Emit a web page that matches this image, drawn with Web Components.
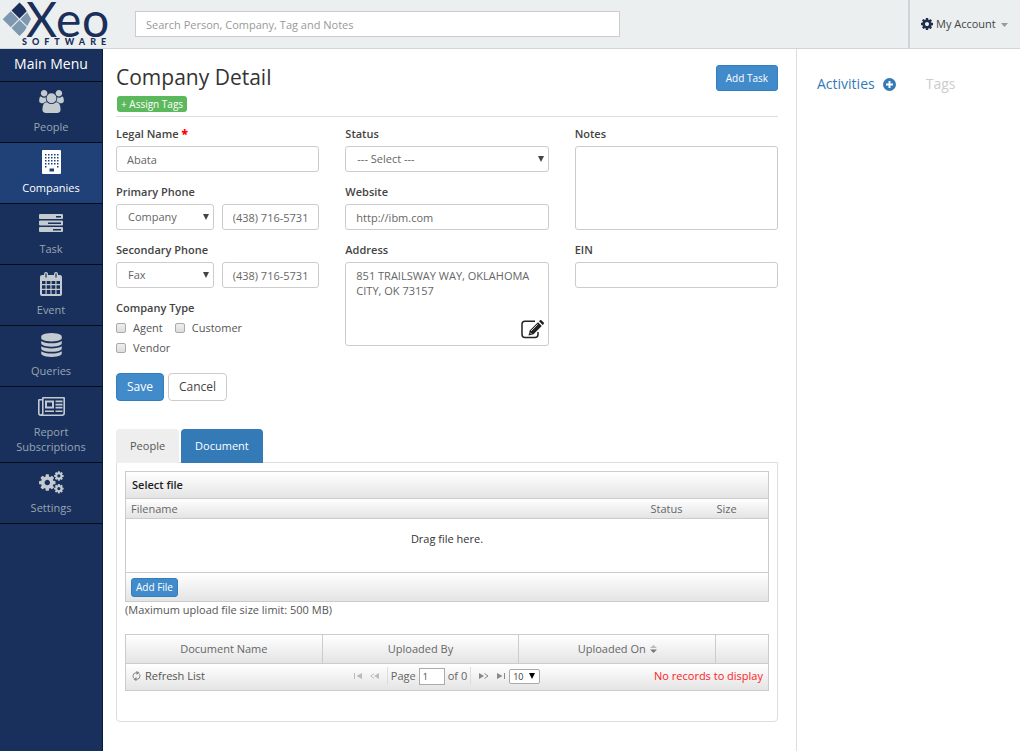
<!DOCTYPE html>
<html lang="en">
<head>
<meta charset="utf-8">
<meta name="viewport" content="width=device-width, initial-scale=1">
<title>Company Detail</title>
<style>
  body { margin: 0; font: 11px/16px "Open Sans", "Noto Sans", sans-serif; color: #555; background: #fff; }
</style>
</head>
<body>
<crm-app></crm-app>

<script>
const BASE = `
  *, *::before, *::after { box-sizing: border-box; }
  :host { display: block; }
  a { color: inherit; text-decoration: none; }
  button { font: inherit; cursor: pointer; }
  .btn { color: #fff; background: #428bca; border: 1px solid #357ebd; border-radius: 3px; padding: 0 9px; }
`;
const define = (name, template, setup) => customElements.define(name, class extends HTMLElement {
  connectedCallback() {
    if (this.shadowRoot) return;
    const root = this.attachShadow({ mode: 'open' });
    root.innerHTML = `<style>${BASE}</style>` + (typeof template === 'function' ? template(this) : template);
    if (setup) setup(root, this);
  }
});

const COG = 'M1152 896q0-106-75-181t-181-75-181 75-75 181 75 181 181 75 181-75 75-181zm512-109v222q0 12-8 23t-20 13l-185 28q-19 54-39 91 35 50 107 138 10 12 10 25t-9 23q-27 37-99 108t-94 71q-12 0-26-9l-138-108q-44 23-91 38-16 136-29 186-7 28-36 28h-222q-14 0-24.5-8.5t-11.5-21.5l-28-184q-49-16-90-37l-141 107q-10 9-25 9-14 0-25-11-126-114-165-168-7-10-7-23 0-12 8-23 15-21 51-66.5t54-70.5q-27-50-41-99l-183-27q-13-2-21-12.5t-8-23.5v-222q0-12 8-23t19-13l186-28q14-46 39-92-40-57-107-138-10-12-10-24 0-10 9-23 26-36 98.5-107.5t94.5-71.5q13 0 26 10l138 107q44-23 91-38 16-136 29-186 7-28 36-28h222q14 0 24.5 8.5t11.5 21.5l28 184q49 16 90 37l142-107q9-9 24-9 13 0 25 10 129 119 165 170 7 8 7 22 0 12-8 23-15 21-51 66.5t-54 70.5q26 50 41 98l183 28q13 2 21 12.5t8 23.5z';
const dots = () => {
  let s = '';
  for (let y = 0; y < 5; y++) for (let x = 0; x < 5; x++)
    if (!(y === 4 && x > 0 && x < 4)) s += `M${3 + x * 3} ${4 + y * 3}h1.5v1.5h-1.5z`;
  return s;
};
// Each icon: [width, height, viewBox, markup]
const ICONS = {
  people: [25, 23, '0 0 1920 1792', '<path d="M593 896q-162 5-265 128h-134q-82 0-138-40.5t-56-118.5q0-353 124-353 6 0 43.5 21t97.5 42.5 119 21.5q67 0 133-23-5 37-5 66 0 139 81 256zm1071 637q0 120-73 189.5t-194 69.5h-874q-121 0-194-69.5t-73-189.5q0-53 3.5-103.5t14-109 26.5-108.5 43-97.5 62-81 85.5-53.5 111.5-20q10 0 43 21.5t73 48 107 48 135 21.5 135-21.5 107-48 73-48 43-21.5q61 0 111.5 20t85.5 53.5 62 81 43 97.5 26.5 108.5 14 109 3.5 103.5zm-1024-1277q0 106-75 181t-181 75-181-75-75-181 75-181 181-75 181 75 75 181zm704 384q0 159-112.5 271.5t-271.5 112.5-271.5-112.5-112.5-271.5 112.5-271.5 271.5-112.5 271.5 112.5 112.5 271.5zm576 225q0 78-56 118.5t-138 40.5h-134q-103-123-265-128 81-117 81-256 0-29-5-66 66 23 133 23 59 0 119-21.5t97.5-42.5 43.5-21q124 0 124 353zm-128-609q0 106-75 181t-181 75-181-75-75-181 75-181 181-75 181 75 75 181z"/>'],
  building: [19, 24, '0 0 19 24', `<path fill-rule="evenodd" d="M1 0h17q1 0 1 1v22q0 1-1 1H1q-1 0-1-1V1q0-1 1-1zM7.5 18.5h4.5v3h-4.5z${dots()}"/>`],
  task: [24, 18, '0 0 24 18', '<path fill-rule="evenodd" d="M1 0h22q1 0 1 1v3q0 1-1 1H1q-1 0-1-1V1q0-1 1-1zM17 2h5v1.5h-5zM1 6.5h22q1 0 1 1v3q0 1-1 1H1q-1 0-1-1v-3q0-1 1-1zM9 8.5h13v1.5H9zM1 13h22q1 0 1 1v3q0 1-1 1H1q-1 0-1-1v-3q0-1 1-1zM14 15h8v1.5h-8z"/>'],
  event: [22, 24, '0 0 22 24', '<path fill-rule="evenodd" d="M2 3h2V2q0-2 2-2t2 2v1h6V2q0-2 2-2t2 2v1h2q2 0 2 2v17q0 2-2 2H2q-2 0-2-2V5q0-2 2-2zM5.4 1.5h1.2v4H5.400zM15.4 1.5h1.2v4h-1.2zM2 9h3.5v3H2zM6.7 9h3.7v3H6.700zM11.6 9h3.7v3h-3.7zM16.5 9H20v3h-3.5zM2 13.2h3.5v3.6H2zM6.7 13.2h3.7v3.6H6.700zM11.6 13.2h3.7v3.6h-3.7zM16.5 13.2H20v3.6h-3.5zM2 18h3.5v4H2zM6.7 18h3.7v4H6.700zM11.6 18h3.7v4h-3.7zM16.5 18H20v4h-3.5z"/>'],
  queries: [21, 24, '128 0 1536 1792', '<path d="M896 768q237 0 443-43t325-127v170q0 69-103 128t-280 93.5-385 34.5-385-34.5-280-93.5-103-128v-170q119 84 325 127t443 43zm0 768q237 0 443-43t325-127v170q0 69-103 128t-280 93.5-385 34.5-385-34.5-280-93.5-103-128v-170q119 84 325 127t443 43zm0-384q237 0 443-43t325-127v170q0 69-103 128t-280 93.5-385 34.5-385-34.5-280-93.5-103-128v-170q119 84 325 127t443 43zm0-1152q208 0 385 34.5t280 93.5 103 128v128q0 69-103 128t-280 93.5-385 34.5-385-34.5-280-93.5-103-128v-128q0-69 103-128t280-93.5 385-34.5z"/>'],
  report: [27, 19, '0 0 27 19', '<path fill-rule="evenodd" d="M5 0h21q1 0 1 1v15q0 3-3 3H3q-3 0-3-3V3q0-1 1-1h3V1q0-1 1-1zM1.6 3.6v12.400q0 1.3 1.2 1.3T4 16V3.600zM5.6 1.600V16q0 .8-.3 1.400H24q1.400 0 1.400-1.400V1.600zM7 3.500h9v8H7zM9 5.500v4h5v-4zM17.500 3.500h7v1.700h-7zM17.500 6.700h7v1.700h-7zM17.500 9.800h7v1.700h-7zM7 13.500h9v1.500H7zM17.500 13.500h7v1.500h-7z"/>'],
  settings: [25, 23, '0 0 25 23', `<path transform="translate(-1.3 2) scale(.0107)" d="${COG}"/><path transform="translate(14.3 -.6) scale(.0062)" d="${COG}"/><path transform="translate(14.3 12.1) scale(.0062)" d="${COG}"/>`],
  cog: [12, 12, '128 128 1536 1536', `<path d="${COG}"/>`],
  plus: [13, 13, '0 0 13 13', '<path fill-rule="evenodd" d="M6.5 0a6.5 6.5 0 1 1 0 13 6.5 6.5 0 0 1 0-13zM5.5 3v2.5H3v2h2.5V10h2V7.500H10v-2H7.500V3z"/>'],
  caret: [7, 4, '0 0 7 4', '<path d="M0 0h7L3.5 4z"/>'],
  arrow: [6, 6, '0 0 6 6', '<path d="M0 0h6L3 6z"/>'],
  edit: [23, 19, '0 0 23 19', '<path d="M14 1.2H4Q1 1.2 1 4v10.5q0 3 3 3h10q3 0 3-3V12" fill="none" stroke="currentColor" stroke-width="1.5"/><path d="M17 2.2l3.8 3.8-8.3 8.2-5 1.3 1.2-5zM18 1.3l1-1q.7-.5 1.4 0l2.3 2.3q.6.7 0 1.4l-1 1z"/><path d="M10 11l6.7-6.6M9 12.5l1.5 1.5" stroke="#fff" stroke-width=".8"/>'],
  first: [8, 6, '0 0 8 6', '<path d="M0 0h1v6H0zM8 0v6L2.5 3z"/>'],
  prev: [9, 6, '0 0 9 6', '<path d="M9 0v6L4 3z"/><path d="M4 .5L.8 3 4 5.5" fill="none" stroke="currentColor"/>'],
  next: [10, 6, '0 0 10 6', '<path d="M0 0v6l5-3z"/><path d="M5.5.5L9 3 5.5 5.5" fill="none" stroke="currentColor"/>'],
  last: [8, 6, '0 0 8 6', '<path d="M7 0h1v6H7zM0 0v6l5.5-3z"/>'],
  refresh: [9, 10, '0 0 9 10', '<path d="M5.5 1.7H4Q1 2 1 5q0 1.5 1 2.5M3.5 8.3H5Q8 8 8 5q0-1.5-1-2.5" fill="none" stroke="currentColor"/><path d="M4.5-.3l3 2-3 2.2zM4.5 6.100v4.200L1.500 8.300z"/>'],
  sort: [7, 8, '0 0 7 8', '<path d="M0 3h7L3.5 0z" opacity=".45"/><path d="M0 4.5h7L3.5 8z"/>']
};
define('crm-icon', el => {
  const [w, h, box, body] = ICONS[el.getAttribute('name')];
  return `<style>:host { display: inline-flex; flex: none; } svg { display: block; }</style>
  <svg width="${w}" height="${h}" viewBox="${box}" fill="currentColor" aria-hidden="true">${body}</svg>`;
});

define('crm-logo', `
  <style>
    :host { flex: none; width: 112px; color: #1b2f5b; }
    svg { display: block; overflow: visible; }
    .name { font: 48px Lato, sans-serif; }
    .sub { font: 900 9px Lato, sans-serif; letter-spacing: 5px; }
  </style>
  <svg width="112" height="48" viewBox="0 0 112 48" role="img" aria-label="Xeo Software" fill="currentColor">
    <path d="M19.500 2.500l8 8-8 8-8-8z"/>
    <path d="M10.700 11.300l8 8-8 8-8-8zM28.300 11.300l8 8-8 8-8-8zM19.500 20l8 8-8 8-8-8z" fill="#7d98af"/>
    <path d="M22 3h8l12 16-12 17h-8l9-17z" fill="#ebeff0"/>
    <text class="name" x="26 56 82" y="37">Xeo</text>
    <text class="sub" x="22" y="45">SOFTWARE</text>
  </svg>`);

define('crm-header', `
  <style>
    :host { display: flex; align-items: stretch; height: 49px; background: #ebeff0; border-bottom: 1px solid #cfd6d9; }
    .search { flex: 1; display: flex; align-items: center; padding: 0 24px 0 23px; }
    input { width: 100%; max-width: 485px; height: 26px; padding: 0 10px; border: 1px solid #ccc; font: inherit; color: #555; background: #fff; }
    input::placeholder { color: #999; opacity: 1; }
    button { display: flex; align-items: center; gap: 3px; padding: 0 12px 0 11px; width: 112px; border: 0; border-left: 2px solid #cfd4d6; background: none; color: #444; white-space: nowrap; }
    crm-icon { color: #1b2f4b; }
    .caret { color: #999; margin: 2px 0 0 2px; }
  </style>
  <crm-logo></crm-logo>
  <div class="search"><input type="search" aria-label="Search" placeholder="Search Person, Company, Tag and Notes"></div>
  <button type="button"><crm-icon name="cog"></crm-icon>My Account<crm-icon class="caret" name="caret"></crm-icon></button>`);

define('crm-nav-item', el => `
  <style>
    a { display: flex; flex-direction: column; align-items: center; gap: 6px; padding: 7px 8px 8px; border-bottom: 1px solid #050d1c; color: #98a5b3; line-height: 15px; text-align: center; }
    :host([active]) a { background: #204178; color: #fff; }
    .pic { display: flex; align-items: center; height: 24px; color: #c3cad0; }
    :host([active]) .pic { color: #fff; }
  </style>
  <a href="#${el.getAttribute('icon')}" ${el.hasAttribute('active') ? 'aria-current="page"' : ''}><span class="pic"><crm-icon name="${el.getAttribute('icon')}"></crm-icon></span><span><slot></slot></span></a>`);

define('crm-nav', `
  <style>
    :host { background: #18305b; border-right: 1px solid #0c1a36; }
    h2 { margin: 0; padding: 5px 0 7px; font: 14px/20px "Open Sans", sans-serif; color: #fff; text-align: center; border-bottom: 1px solid #050d1c; }
  </style>
  <nav>
    <h2>Main Menu</h2>
    <crm-nav-item icon="people">People</crm-nav-item>
    <crm-nav-item icon="building" active>Companies</crm-nav-item>
    <crm-nav-item icon="task">Task</crm-nav-item>
    <crm-nav-item icon="event">Event</crm-nav-item>
    <crm-nav-item icon="queries">Queries</crm-nav-item>
    <crm-nav-item icon="report">Report Subscriptions</crm-nav-item>
    <crm-nav-item icon="settings">Settings</crm-nav-item>
  </nav>`);

const FIELD = `
  label, legend { display: block; margin: 0 0 4px; padding: 0; line-height: 16px; font-weight: 600; color: #444; }
  input[type=text], input[type=tel], input[type=url], select, textarea {
    display: block; width: 100%; height: 26px; margin: 0; padding: 0 10px; border: 1px solid #ccc; border-radius: 3px;
    background: #fff; color: #666; font: 11px/16px "Open Sans", sans-serif; appearance: none; }
  textarea { height: 84px; padding: 5px 10px; resize: none; line-height: 15px; }
  select { padding: 0 11px; }
  .control { position: relative; min-width: 0; }
  .arrow { position: absolute; right: 5px; top: 10px; color: #444; pointer-events: none; }
  .edit { position: absolute; right: 5px; bottom: 7px; display: flex; padding: 0; border: 0; background: none; color: #222; }
`;
const select = (id, text) =>
  `<div class="control"><select id="${id}"><option>${text}</option></select><crm-icon class="arrow" name="arrow"></crm-icon></div>`;

define('crm-field', el => {
  const value = el.getAttribute('value') || '', kind = el.getAttribute('kind') || 'text';
  let control;
  if (kind === 'select') control = select('c', value);
  else if (kind === 'textarea') control = `<div class="control"><textarea id="c">${value}</textarea>${el.hasAttribute('editable')
    ? '<button class="edit" type="button" aria-label="Edit address"><crm-icon name="edit"></crm-icon></button>' : ''}</div>`;
  else control = `<input id="c" type="${kind}" value="${value}">`;
  const star = el.hasAttribute('required') ? ' <span class="star">*</span>' : '';
  return `<style>${FIELD} .star { color: #f00; font-size: 12px; line-height: 8px; font-weight: 800; }</style>
    <label for="c">${el.getAttribute('label')}${star}</label>${control}`;
});

define('crm-phone', el => `
  <style>${FIELD} .pair { display: grid; grid-template-columns: 1fr 1fr; gap: 8px; }</style>
  <label for="kind">${el.getAttribute('label')}</label>
  <div class="pair">${select('kind', el.getAttribute('kind'))}
    <input type="tel" aria-label="${el.getAttribute('label')} number" value="${el.getAttribute('number')}"></div>`);

define('crm-checks', `
  <style>${FIELD}
    fieldset { margin: 0; padding: 0; border: 0; }
    .list { display: flex; flex-wrap: wrap; column-gap: 12px; width: 160px; }
    .list label { display: flex; align-items: center; gap: 7px; margin: 0; line-height: 20px; font-weight: 400; color: #555; }
    input { appearance: none; width: 10px; height: 10px; margin: 0; border: 1px solid #aaa; border-radius: 2px; background: linear-gradient(#eee, #ddd); }
    legend { margin-bottom: 2px; }
  </style>
  <fieldset><legend>Company Type</legend><div class="list">
    <label><input type="checkbox">Agent</label>
    <label><input type="checkbox">Customer</label>
    <label><input type="checkbox">Vendor</label>
  </div></fieldset>`);

define('crm-company-form', `
  <style>
    .cols { display: grid; grid-template-columns: repeat(3, minmax(0, 1fr)); gap: 26px; }
    .col { display: flex; flex-direction: column; gap: 12px; }
    .actions { display: flex; gap: 4px; margin-top: 15px; }
    .btn { height: 28px; padding: 0 10px; border-radius: 4px; font-size: 12px; }
    .plain { color: #444; background: #fff; border-color: #ccc; }
  </style>
  <form>
    <div class="cols">
      <div class="col">
        <crm-field label="Legal Name" value="Abata" required></crm-field>
        <crm-phone label="Primary Phone" kind="Company" number="(438) 716-5731"></crm-phone>
        <crm-phone label="Secondary Phone" kind="Fax" number="(438) 716-5731"></crm-phone>
        <crm-checks></crm-checks>
      </div>
      <div class="col">
        <crm-field label="Status" kind="select" value="--- Select ---"></crm-field>
        <crm-field label="Website" kind="url" value="http://ibm.com"></crm-field>
        <crm-field label="Address" kind="textarea" value="851 TRAILSWAY WAY, OKLAHOMA CITY, OK 73157" editable></crm-field>
      </div>
      <div class="col">
        <crm-field label="Notes" kind="textarea"></crm-field>
        <crm-field label="EIN"></crm-field>
      </div>
    </div>
    <div class="actions"><button class="btn" type="button">Save</button><button class="btn plain" type="button">Cancel</button></div>
  </form>`);

const TABLE = `
  table { width: 100%; border-collapse: collapse; table-layout: fixed; border: 1px solid #ccc; }
  th, td { padding: 0 6px; font-weight: 400; color: #666; }
  .bar { background: linear-gradient(#fff, #e4e4e4); }
  tr { border-bottom: 1px solid #ccc; }
`;
define('crm-upload', `
  <style>${TABLE}
    caption { height: 27px; padding: 0 6px; border: 1px solid #ccc; border-bottom: 0; text-align: left; line-height: 26px; font-weight: 600; color: #222; }
    th { height: 20px; padding: 0 5px; line-height: 19px; text-align: left; }
    .status { width: 66px; padding: 0; } .size { width: 52px; padding: 0; }
    .drop { height: 54px; padding: 0 0 14px; text-align: center; color: #333; }
    .foot { height: 29px; padding: 0 5px; }
    .btn { display: block; height: 19px; padding: 0 4px; font-size: 10px; line-height: 17px; }
    p { margin: 0; line-height: 16px; }
  </style>
  <table>
    <caption class="bar">Select file</caption>
    <thead><tr class="bar"><th scope="col">Filename</th><th class="status" scope="col">Status</th><th class="size" scope="col">Size</th></tr></thead>
    <tbody><tr><td class="drop" colspan="3">Drag file here.</td></tr></tbody>
    <tfoot><tr class="bar"><td class="foot" colspan="3"><button class="btn" type="button">Add File</button></td></tr></tfoot>
  </table>
  <p>(Maximum upload file size limit: 500 MB)</p>`);

define('crm-pager', `
  <style>
    :host { display: grid; grid-template-columns: 1fr auto 1fr; align-items: center; height: 26px; padding-bottom: 2px; }
    button { display: flex; align-items: center; padding: 0; border: 0; background: none; color: #888; }
    .refresh { gap: 4px; color: #555; }
    .refresh crm-icon { color: #888; }
    .pages { display: flex; align-items: center; gap: 8px; }
    .off { color: #bbb; }
    .page { display: flex; align-items: center; gap: 3px; height: 18px; padding: 0 3px; border: solid #ddd; border-width: 0 1px; }
    input { width: 26px; height: 17px; margin: 0; padding: 0 3px; border: 1px solid #aaa; font: 9px "Open Sans", sans-serif; color: #444; }
    .count { position: relative; margin-left: -4px; }
    select { display: block; appearance: none; width: 31px; height: 15px; margin: 0; padding: 0 3px; border: 1px solid #aaa; border-radius: 2px; background: #fff; color: #333; font: 9px/13px "Open Sans", sans-serif; }
    .arrow { position: absolute; right: 5px; top: 4px; color: #000; pointer-events: none; }
    .none { justify-self: end; margin-right: -1px; color: #f22; }
  </style>
  <button class="refresh" type="button"><crm-icon name="refresh"></crm-icon>Refresh List</button>
  <div class="pages">
    <button class="off" type="button" aria-label="First page"><crm-icon name="first"></crm-icon></button>
    <button class="off" type="button" aria-label="Previous page"><crm-icon name="prev"></crm-icon></button>
    <div class="page"><label for="p">Page</label><input id="p" type="text" value="1"><span>of 0</span></div>
    <button type="button" aria-label="Next page"><crm-icon name="next"></crm-icon></button>
    <button type="button" aria-label="Last page"><crm-icon name="last"></crm-icon></button>
    <div class="count"><select aria-label="Rows per page"><option>10</option></select><crm-icon class="arrow" name="arrow"></crm-icon></div>
  </div>
  <span class="none">No records to display</span>`);

define('crm-documents', `
  <style>${TABLE}
    :host { margin-top: 16px; }
    th { height: 29px; text-align: center; border-right: 1px solid #ccc; }
    .last { width: 53px; }
    crm-icon { vertical-align: 0; margin-left: 1px; color: #777; }
  </style>
  <table>
    <thead><tr class="bar"><th scope="col">Document Name</th><th scope="col">Uploaded By</th><th scope="col">Uploaded On <crm-icon name="sort"></crm-icon></th><th class="last" aria-label="Actions"></th></tr></thead>
    <tfoot><tr class="bar"><td colspan="4"><crm-pager></crm-pager></td></tr></tfoot>
  </table>`);

define('crm-tabs', `
  <style>
    :host { margin-top: 28px; }
    .tabs { display: flex; gap: 2px; }
    .tabs button { height: 34px; padding: 0 14px; border: 0; border-radius: 4px 4px 0 0; background: #eee; color: #555; }
    .tabs button[aria-selected=true] { background: #337ab7; color: #fff; }
    .panel { margin-top: -1px; padding: 8px 8px 30px; border: 1px solid #ddd; border-radius: 0 0 4px 4px; }
  </style>
  <div class="tabs" role="tablist"><button role="tab" type="button" aria-selected="false">People</button><button role="tab" type="button" aria-selected="true">Document</button></div>
  <div class="panel" role="tabpanel"><slot></slot></div>`, root => {
    const tabs = root.querySelectorAll('[role=tab]');
    tabs.forEach(t => t.addEventListener('click', () => tabs.forEach(o => o.setAttribute('aria-selected', o === t))));
  });

define('crm-page-title', `
  <style>
    :host { display: flex; justify-content: space-between; align-items: flex-start; padding-bottom: 4px; margin-bottom: 9px; border-bottom: 1px solid #ddd; }
    h1 { margin: 0 0 6px; font: 21px/26px "Open Sans", sans-serif; color: #333; }
    .btn { height: 26px; margin-top: 1px; font-size: 10px; font-weight: 500; }
    .tag { display: block; height: 16px; margin-left: 1px; padding: 0 4px; border: 0; border-radius: 3px; background: #5cb85c; color: #fff; font-size: 10px; font-weight: 500; line-height: 16px; }
  </style>
  <div><h1>Company Detail</h1><button class="tag" type="button">+ Assign Tags</button></div>
  <button class="btn" type="button">Add Task</button>`);

define('crm-aside', `
  <style>
    :host { border-left: 1px solid #ddd; padding: 25px 20px; }
    nav { display: flex; gap: 30px; font-size: 14px; line-height: 20px; }
    a { display: flex; align-items: center; gap: 8px; color: #337ab7; }
    .off { color: #ccc; }
  </style>
  <nav><a href="#activities">Activities<crm-icon name="plus"></crm-icon></a><a class="off" href="#tags">Tags</a></nav>`);

define('crm-app', `
  <style>
    :host { display: flex; flex-direction: column; min-height: 100vh; }
    .body { flex: 1; display: grid; grid-template-columns: 103px minmax(0, 1fr) 224px; }
    main { padding: 15px 18px 29px 13px; }
  </style>
  <crm-header></crm-header>
  <div class="body">
    <crm-nav></crm-nav>
    <main>
      <crm-page-title></crm-page-title>
      <crm-company-form></crm-company-form>
      <crm-tabs><crm-upload></crm-upload><crm-documents></crm-documents></crm-tabs>
    </main>
    <crm-aside></crm-aside>
  </div>`);
</script>
</body>
</html>
